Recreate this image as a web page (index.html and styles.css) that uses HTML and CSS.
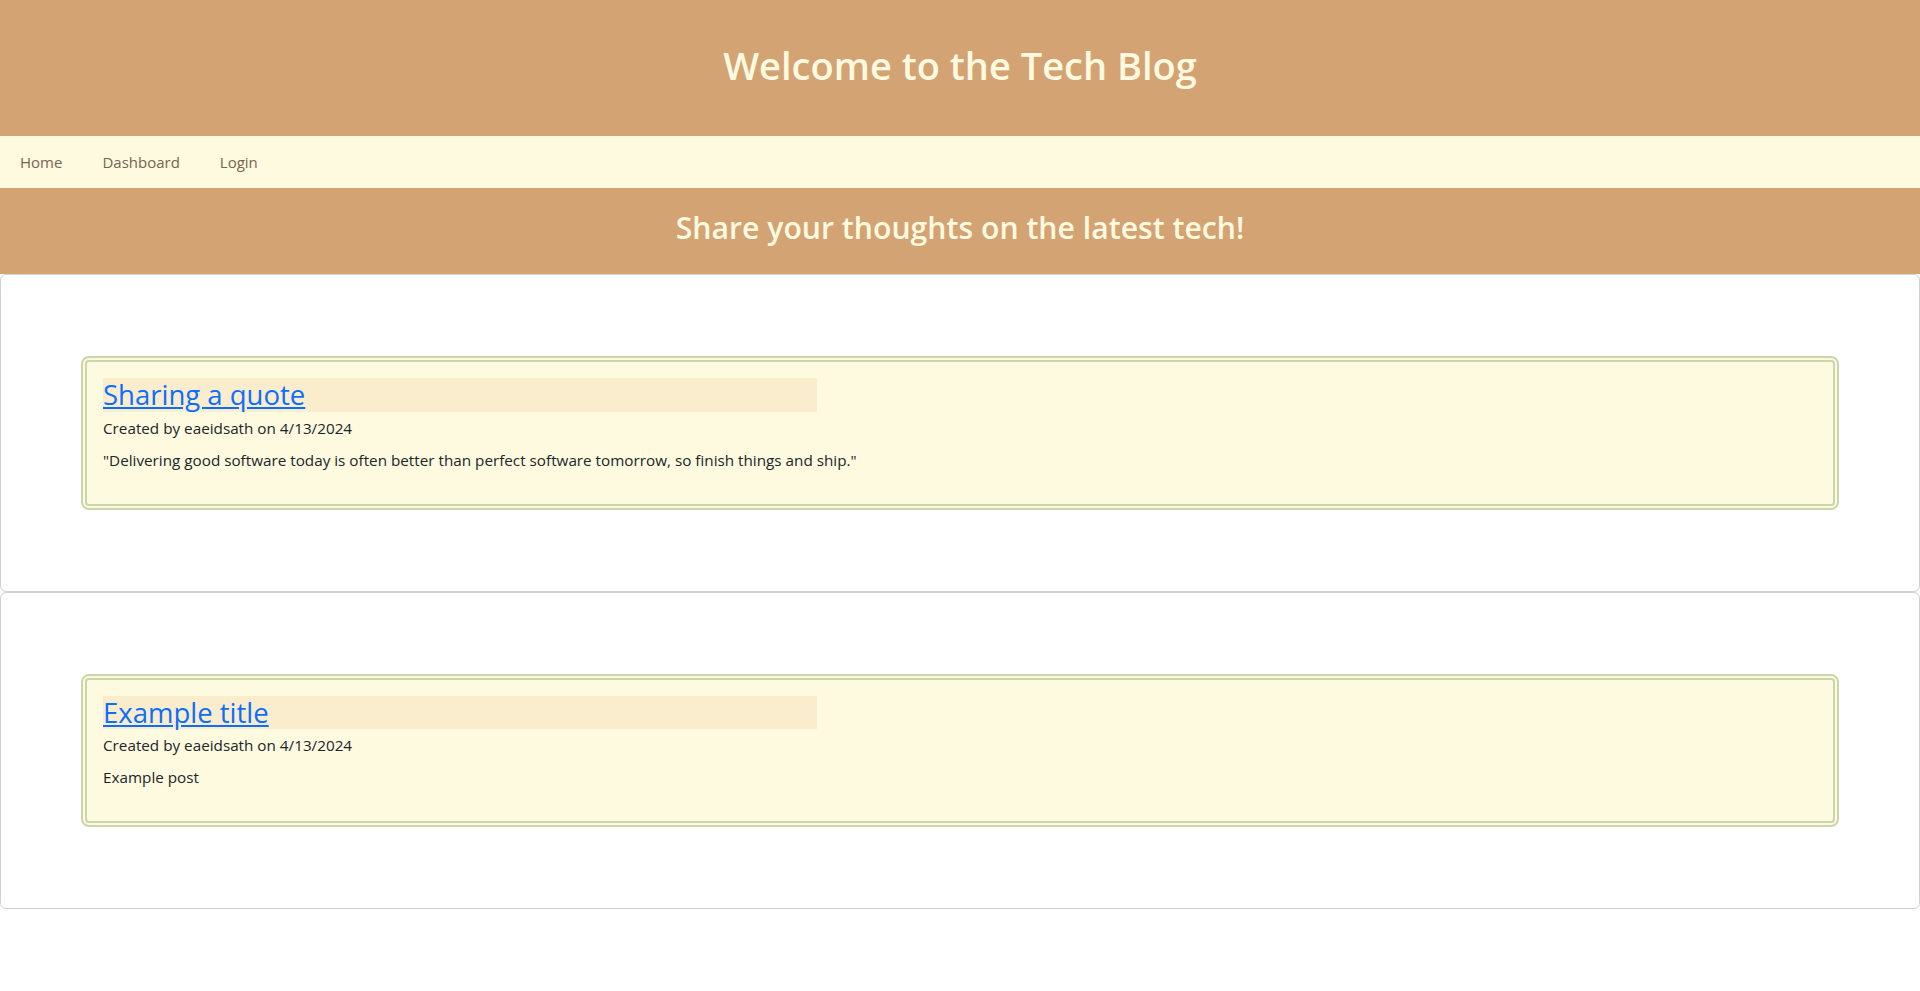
FILE: index.html
```html
<!DOCTYPE html>
<html lang="en">
<head>
<meta charset="utf-8">
<title>Tech Blog</title>
<link rel="stylesheet" href="styles.css">
</head>
<body>
<header class="site-header">
  <h1 class="site-title">Welcome to the Tech Blog</h1>
</header>
<nav class="site-nav">
  <a class="nav-link" href="#">Home</a>
  <a class="nav-link" href="#">Dashboard</a>
  <a class="nav-link" href="#">Login</a>
</nav>
<section class="hero">
  <h2 class="hero-title">Share your thoughts on the latest tech!</h2>
</section>
<main class="posts">
  <article class="card">
    <div class="post">
      <h3 class="post-title"><a href="#">Sharing a quote</a></h3>
      <p class="post-meta">Created by eaeidsath on 4/13/2024</p>
      <p class="post-body">"Delivering good software today is often better than perfect software tomorrow, so finish things and ship."</p>
    </div>
  </article>
  <article class="card">
    <div class="post">
      <h3 class="post-title"><a href="#">Example title</a></h3>
      <p class="post-meta">Created by eaeidsath on 4/13/2024</p>
      <p class="post-body">Example post</p>
    </div>
  </article>
</main>
</body>
</html>
```
FILE: styles.css
```css
* { box-sizing: border-box; }
html, body {
  margin: 0;
  padding: 0;
  background: #ffffff;
  color: #212529;
  font-family: "Open Sans", "Noto Sans", "Liberation Sans", sans-serif;
  font-size: 15.25px;
  line-height: 24px;
}
.site-header {
  background: #d4a373;
  padding: 41px 0 0;
  text-align: center;
  height: 136px;
}
.site-title {
  margin: 0;
  font-size: 38px;
  font-weight: 600;
  line-height: 48px;
  color: #fefae0;
}
.site-nav {
  background: #fefae0;
  height: 52px;
  display: flex;
  align-items: center;
  padding: 0 12px;
  gap: 24px;
}
.nav-link {
  color: #76644f;
  text-decoration: none;
  padding: 8px;
  font-size: 15px;
}
.hero {
  background: #d4a373;
  padding: 21px 0 0;
  height: 86px;
  text-align: center;
}
.hero-title {
  margin: 0;
  font-size: 30.2px;
  font-weight: 600;
  line-height: 38px;
  color: #fefae0;
}
.posts {
  display: flex;
  flex-direction: column;
}
.card {
  border: 1px solid #d2d2d2;
  border-radius: 6px;
  padding: 81px 80px;
  background: #fff;
}
.post {
  background: #fefae0;
  border: 6px double #ccd5ae;
  border-radius: 8px;
  padding: 16px;
}
.post-title {
  width: 41.6667%;
  margin: 0 0 4px;
  background: #faedcd;
  font-size: 27.5px;
  font-weight: 500;
  line-height: 33.6px;
}
.post-title a { color: #0d6efd; text-decoration: underline; }
.post-meta { margin: 0 0 8px; }
.post-body { margin: 0 0 16px; }
```
